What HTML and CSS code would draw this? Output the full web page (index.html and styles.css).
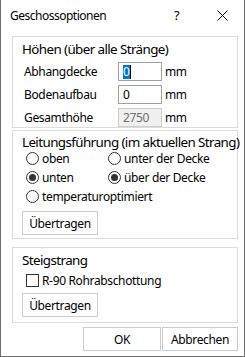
FILE: index.html
```html
<!DOCTYPE html>
<html lang="de">
<head>
  <meta charset="UTF-8" />
  <title>Geschossoptionen</title>
  <link rel="stylesheet" href="styles.css">
</head>
<body>
  <div class="dialog">
    <div class="titlebar">
      <span class="title">Geschossoptionen</span>
      <span class="help">?</span>
      <span class="close">
        <svg width="11" height="11" viewBox="0 0 11 11"><path d="M0.5 0.5 L10.5 10.5 M10.5 0.5 L0.5 10.5" stroke="#000" stroke-width="1"/></svg>
      </span>
    </div>

    <div class="group heights">
      <div class="group-title">Höhen (über alle Stränge)</div>
      <div class="field">
        <span class="label">Abhangdecke</span>
        <div class="edit"><span class="sel">0</span><span class="caret"></span></div>
        <span class="unit">mm</span>
      </div>
      <div class="field">
        <span class="label">Bodenaufbau</span>
        <div class="edit">0</div>
        <span class="unit">mm</span>
      </div>
      <div class="field">
        <span class="label">Gesamthöhe</span>
        <div class="edit disabled">2750</div>
        <span class="unit">mm</span>
      </div>
    </div>

    <div class="group routing">
      <div class="group-title">Leitungsführung (im aktuellen Strang)</div>
      <div class="radios">
        <label class="radio"><span class="dot"></span>oben</label>
        <label class="radio"><span class="dot"></span>unter der Decke</label>
        <label class="radio"><span class="dot on"></span>unten</label>
        <label class="radio"><span class="dot on"></span>über der Decke</label>
        <label class="radio wide"><span class="dot"></span>temperaturoptimiert</label>
      </div>
      <button class="btn apply">Übertragen</button>
    </div>

    <div class="group riser">
      <div class="group-title">Steigstrang</div>
      <label class="check"><span class="box"></span>R-90 Rohrabschottung</label>
      <button class="btn apply">Übertragen</button>
    </div>

    <div class="actions">
      <button class="btn ok">OK</button>
      <button class="btn cancel">Abbrechen</button>
    </div>
  </div>
</body>
</html>
```

FILE: styles.css
```css
body {
  margin: 0;
  font-family: 'Noto Sans', sans-serif;
  font-size: 12px;
  letter-spacing: -0.35px;
  color: #000;
  background: #fff;
}
.dialog {
  width: 245px;
  height: 357px;
  box-sizing: border-box;
  border: 1px solid #6f6f6f;
  border-top: none;
  background: #fff;
}
.titlebar {
  height: 36px;
  display: flex;
  align-items: center;
  padding: 0 0 6px 9px;
  box-sizing: border-box;
}
.title {
  font-size: 12px;
  letter-spacing: -0.5px;
  flex: 1;
}
.help {
  font-size: 13px;
  width: 14px;
  margin-right: 29px;
}
.close {
  width: 11px;
  height: 11px;
  margin-right: 16px;
  display: flex;
}
.group {
  margin-left: 11px;
  width: 226px;
  box-sizing: border-box;
  border: 1px solid #dcdcdc;
  padding: 3px 0 0 9px;
}
.group-title {
  font-size: 13.4px;
  letter-spacing: -0.6px;
  line-height: 18px;
  white-space: nowrap;
}
.heights {
  height: 92px;
}
.field {
  display: flex;
  align-items: center;
  height: 19px;
  margin-top: 4px;
}
.heights .field:first-of-type {
  margin-top: 0;
}
.label {
  width: 94px;
  padding-left: 2px;
}
.edit {
  width: 44px;
  height: 19px;
  box-sizing: border-box;
  border: 1px solid #a0a0a0;
  padding-left: 4px;
  display: flex;
  align-items: center;
  background: #fff;
}
.edit.disabled {
  background: #f0f0f0;
  border-color: #cccccc;
  color: #6d6d6d;
}
.sel {
  background: #0078d7;
  color: #fff;
  line-height: 14px;
}
.caret {
  width: 1px;
  height: 14px;
  background: #000;
}
.unit {
  margin-left: 3px;
}
.routing {
  margin-top: 2px;
  height: 109px;
  padding-top: 5px;
}
.routing .group-title {
  line-height: 13px;
}
.radios {
  display: grid;
  grid-template-columns: 82px auto;
  grid-auto-rows: 19px;
}
.radio, .check {
  display: flex;
  align-items: center;
  padding-left: 4px;
}
.radio.wide {
  grid-column: span 2;
}
.dot {
  width: 13px;
  height: 13px;
  box-sizing: border-box;
  border: 1px solid #333;
  border-radius: 50%;
  margin-right: 3px;
  display: flex;
  align-items: center;
  justify-content: center;
}
.dot.on::after {
  content: '';
  width: 7px;
  height: 7px;
  border-radius: 50%;
  background: #333;
}
.btn {
  font-family: inherit;
  font-size: 12px;
  letter-spacing: -0.35px;
  color: #000;
  background: #fff;
  border: 1px solid #cccccc;
  height: 24px;
  padding: 0;
  margin: 0;
}
.apply {
  width: 76px;
  margin-top: 5px;
}
.riser {
  margin-top: 8px;
  height: 76px;
}
.check {
  height: 19px;
  margin-top: 2px;
}
.box {
  width: 13px;
  height: 13px;
  box-sizing: border-box;
  border: 1px solid #333;
  margin-right: 3px;
}
.riser .apply {
  margin-top: 3px;
}
.actions {
  display: flex;
  justify-content: flex-end;
  gap: 1px;
  margin: 4px 6px 0 0;
}
.ok {
  width: 78px;
}
.cancel {
  width: 76px;
}
```
